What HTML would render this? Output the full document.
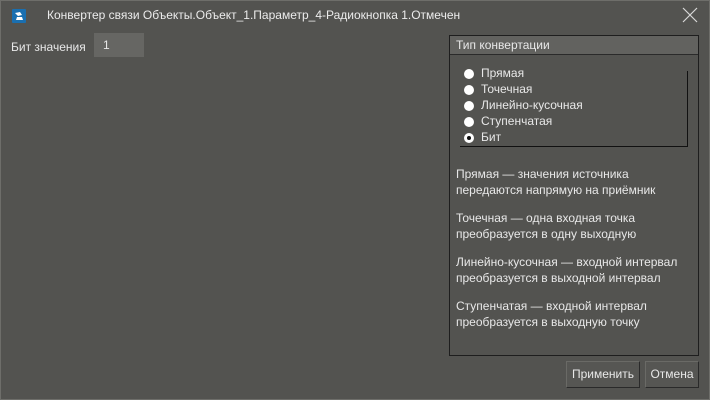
<!DOCTYPE html>
<html><head><meta charset="utf-8"><style>
*{margin:0;padding:0;box-sizing:border-box}
body{width:710px;height:400px;background:#535350;font-family:"Liberation Sans","DejaVu Sans",sans-serif;font-size:12px;color:#e8e8e8;position:relative;overflow:hidden}
.frame{position:absolute;left:0;top:0;width:710px;height:400px;border:1px solid #6e6e6a}
.t{position:absolute;white-space:nowrap}
.icon{position:absolute;left:12px;top:9px;width:14px;height:14px;background:#1a6fb0;border-radius:1px}
.panel{position:absolute;left:449px;top:35px;width:250px;height:321px;border:1px solid #1e1e1e}
.ph{height:19px;background:#62625f;border-bottom:1px solid #2a2a2a;padding:2px 0 0 6px}
.radio{position:absolute;width:10px;height:10px;border-radius:50%;background:#fff}
.btn{position:absolute;top:361px;height:27px;border:1px solid #2a2a2a;border-top-color:#6a6a66;border-left-color:#6a6a66;background:#565653;text-align:center;line-height:25px;font-size:12px}
</style></head><body>
<div class="frame"></div>
<div class="icon"><svg width="14" height="14" viewBox="0 0 14 14"><path d="M3 4 L8 3 L10 6 L6 7 Z M5 8 L10 8 L11 11 L4 11 Z" fill="#fff"/></svg></div>
<div class="t" style="left:47px;top:8px;font-size:12px;color:#ececec">Конвертер связи Объекты.Объект_1.Параметр_4-Радиокнопка 1.Отмечен</div>
<svg style="position:absolute;left:682px;top:7px" width="16" height="16" viewBox="0 0 16 16"><path d="M1 1L15 15M15 1L1 15" stroke="#d8d8d8" stroke-width="1.2"/></svg>
<div class="t" style="left:11px;top:40px">Бит значения</div>
<div style="position:absolute;left:94px;top:33px;width:50px;height:24px;background:#666663"></div>
<div class="t" style="left:103px;top:38px">1</div>
<div class="panel">
<div class="ph">Тип конвертации</div>
<div style="position:absolute;left:10px;top:110px;width:228px;height:1px;background:#111"></div>
<div style="position:absolute;left:237px;top:35px;width:1px;height:76px;background:#111"></div>
<div class="radio" style="left:14px;top:33px"></div><div class="t" style="left:31px;top:30px">Прямая</div>
<div class="radio" style="left:14px;top:49px"></div><div class="t" style="left:31px;top:46px">Точечная</div>
<div class="radio" style="left:14px;top:65px"></div><div class="t" style="left:31px;top:62px">Линейно-кусочная</div>
<div class="radio" style="left:14px;top:81px"></div><div class="t" style="left:31px;top:78px">Ступенчатая</div>
<div class="radio" style="left:14px;top:97px"><div style="position:absolute;left:3px;top:3px;width:4px;height:4px;border-radius:50%;background:#111"></div></div><div class="t" style="left:31px;top:94px">Бит</div>
<div class="t" style="left:6px;top:130px;line-height:16px">Прямая — значения источника<br>передаются напрямую на приёмник</div>
<div class="t" style="left:6px;top:174px;line-height:16px">Точечная — одна входная точка<br>преобразуется в одну выходную</div>
<div class="t" style="left:6px;top:218px;line-height:16px">Линейно-кусочная — входной интервал<br>преобразуется в выходной интервал</div>
<div class="t" style="left:6px;top:262px;line-height:16px">Ступенчатая — входной интервал<br>преобразуется в выходную точку</div>
</div>
<div class="btn" style="left:566px;width:74px">Применить</div>
<div class="btn" style="left:645px;width:54px">Отмена</div>
</body></html>
